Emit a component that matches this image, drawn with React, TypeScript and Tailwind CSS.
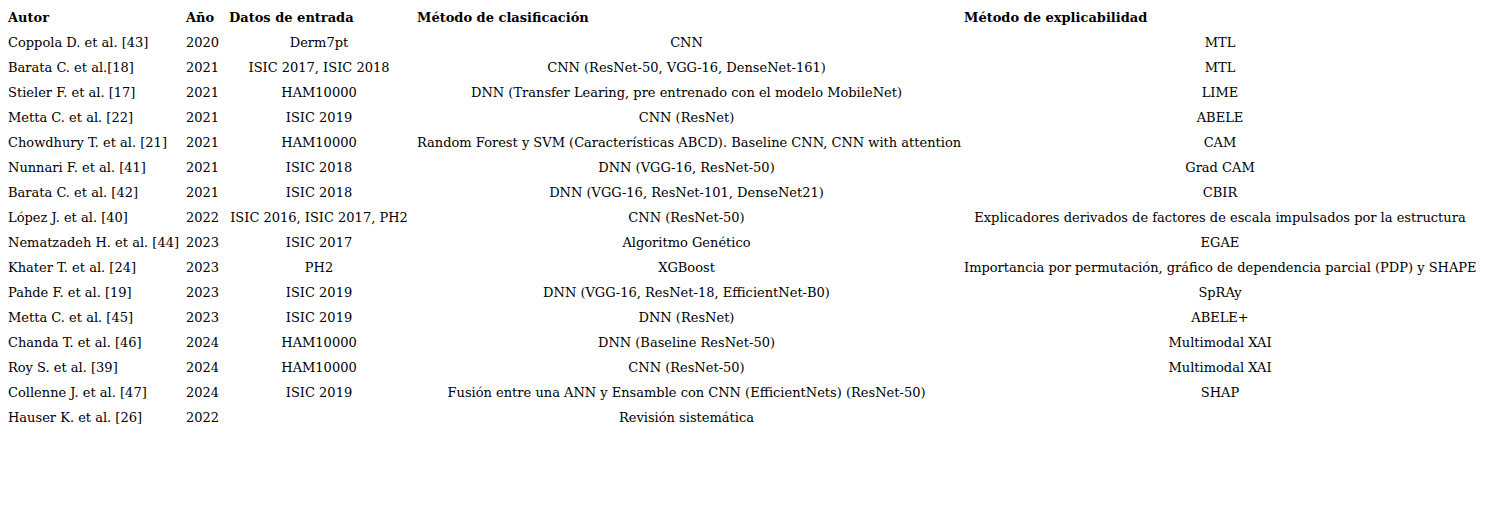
const rows = [
  ["Coppola D. et al. [43]", "2020", "Derm7pt", "CNN", "MTL"],
  ["Barata C. et al.[18]", "2021", "ISIC 2017, ISIC 2018", "CNN (ResNet-50, VGG-16, DenseNet-161)", "MTL"],
  ["Stieler F. et al. [17]", "2021", "HAM10000", "DNN (Transfer Learing, pre entrenado con el modelo MobileNet)", "LIME"],
  ["Metta C. et al. [22]", "2021", "ISIC 2019", "CNN (ResNet)", "ABELE"],
  ["Chowdhury T. et al. [21]", "2021", "HAM10000", "Random Forest y SVM (Características ABCD). Baseline CNN, CNN with attention", "CAM"],
  ["Nunnari F. et al. [41]", "2021", "ISIC 2018", "DNN (VGG-16, ResNet-50)", "Grad CAM"],
  ["Barata C. et al. [42]", "2021", "ISIC 2018", "DNN (VGG-16, ResNet-101, DenseNet21)", "CBIR"],
  ["López J. et al. [40]", "2022", "ISIC 2016, ISIC 2017, PH2", "CNN (ResNet-50)", "Explicadores derivados de factores de escala impulsados por la estructura"],
  ["Nematzadeh H. et al. [44]", "2023", "ISIC 2017", "Algoritmo Genético", "EGAE"],
  ["Khater T. et al. [24]", "2023", "PH2", "XGBoost", "Importancia por permutación, gráfico de dependencia parcial (PDP) y SHAPE"],
  ["Pahde F. et al. [19]", "2023", "ISIC 2019", "DNN (VGG-16, ResNet-18, EfficientNet-B0)", "SpRAy"],
  ["Metta C. et al. [45]", "2023", "ISIC 2019", "DNN (ResNet)", "ABELE+"],
  ["Chanda T. et al. [46]", "2024", "HAM10000", "DNN (Baseline ResNet-50)", "Multimodal XAI"],
  ["Roy S. et al. [39]", "2024", "HAM10000", "CNN (ResNet-50)", "Multimodal XAI"],
  ["Collenne J. et al. [47]", "2024", "ISIC 2019", "Fusión entre una ANN y Ensamble con CNN (EfficientNets) (ResNet-50)", "SHAP"],
  ["Hauser K. et al. [26]", "2022", "", "Revisión sistemática", ""],
];

const headers = ["Autor", "Año", "Datos de entrada", "Método de clasificación", "Método de explicabilidad"];

export default function App() {
  return (
    <div className="min-h-screen bg-white pl-1 pt-[5px] font-['DejaVu_Serif',serif] text-[13px] leading-[17px] text-black">
      <div className="grid grid-cols-[178px_43px_188px_547px_520px]">
        {headers.map((h) => (
          <div key={h} className="whitespace-nowrap px-1 py-1 text-left font-bold">
            {h}
          </div>
        ))}
        {rows.map((r) =>
          r.map((cell, i) => (
            <div
              key={r[0] + i}
              className={
                i < 2
                  ? "whitespace-nowrap px-1 py-1 text-left"
                  : "whitespace-nowrap px-1 py-1 text-center"
              }
            >
              {cell}
            </div>
          ))
        )}
      </div>
    </div>
  );
}
